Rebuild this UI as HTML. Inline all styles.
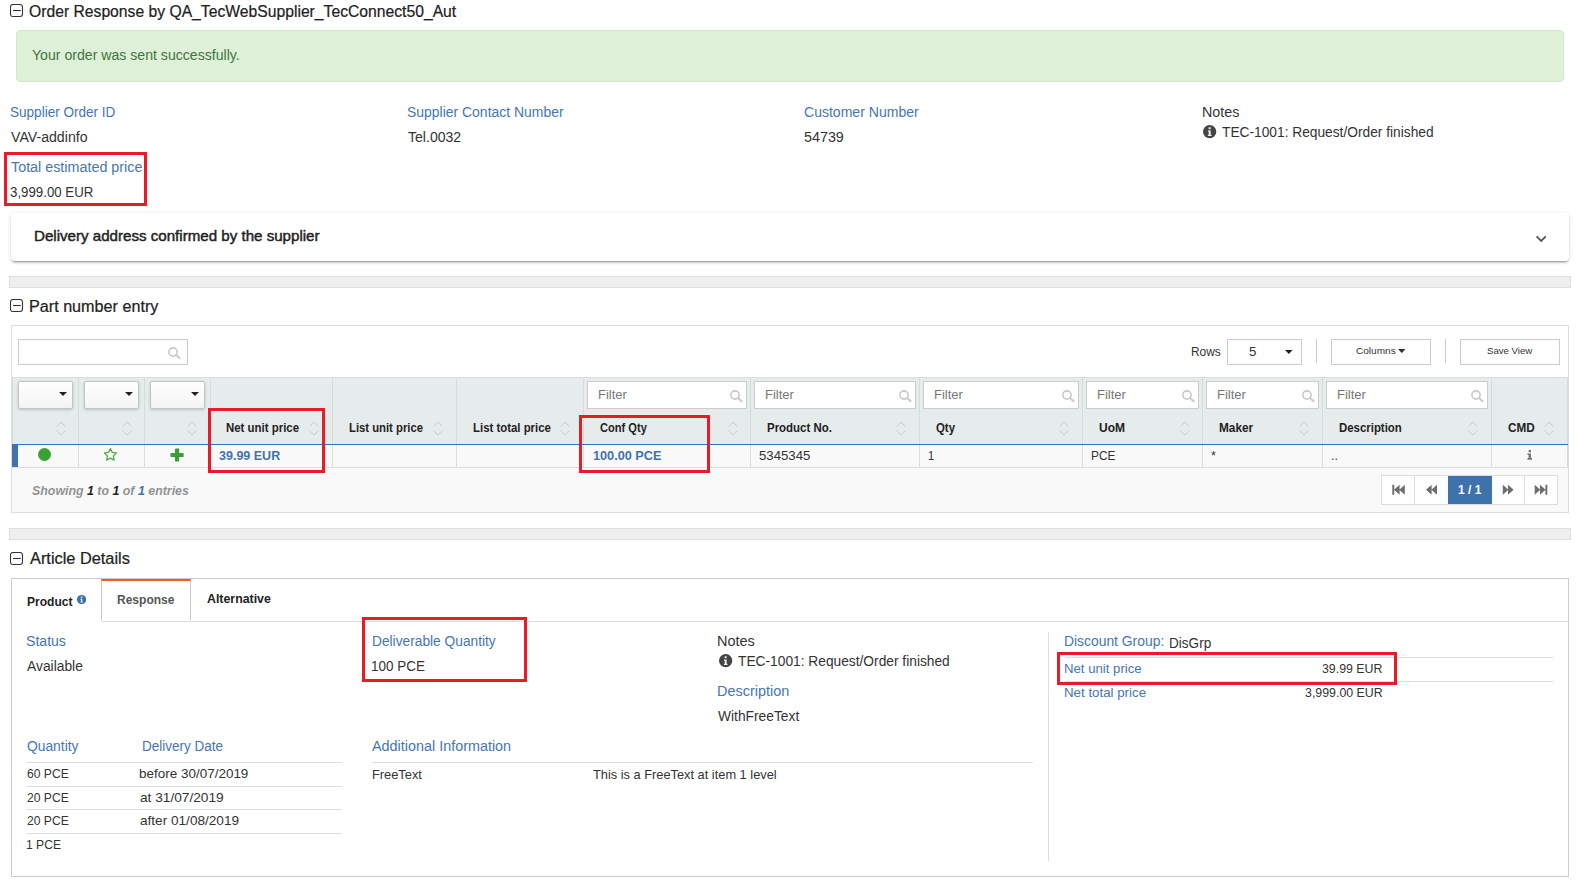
<!DOCTYPE html>
<html><head><meta charset="utf-8"><title>Order Response</title>
<style>
html,body{margin:0;padding:0;background:#fff}
body{width:1581px;height:881px;position:relative;overflow:hidden;font-family:"Liberation Sans",sans-serif}
div,span.t,svg{position:absolute;box-sizing:border-box}
span.t{white-space:pre;transform-origin:0 0;display:block}
</style></head>
<body>
<svg style="left:10px;top:4px" width="14" height="14" viewBox="0 0 14 14"><rect x="0.5" y="0.5" width="12" height="12" rx="2.5" fill="#fff" stroke="#333" stroke-width="1.1"/><path d="M3 6.5h7.8" stroke="#333" stroke-width="1.1"/></svg>
<span class="t" style="left:29.25px;top:3.60px;font:400 16px/1 'Liberation Sans',sans-serif;color:#222;transform:scaleX(0.9809);-webkit-text-stroke:0.22px #222">Order Response by QA_TecWebSupplier_TecConnect50_Aut</span>
<div style="left:16px;top:30px;width:1548px;height:52px;background:#dff0d8;border:1px solid #d3e8c8;border-radius:4px"></div>
<span class="t" style="left:31.99px;top:47.70px;font:400 14px/1 'Liberation Sans',sans-serif;color:#3c763d;transform:scaleX(1.0075);">Your order was sent successfully.</span>
<span class="t" style="left:10.29px;top:105.00px;font:400 14px/1 'Liberation Sans',sans-serif;color:#4676b0;transform:scaleX(0.9676);">Supplier Order ID</span>
<span class="t" style="left:10.68px;top:130.00px;font:400 14px/1 'Liberation Sans',sans-serif;color:#333;transform:scaleX(1.0104);">VAV-addinfo</span>
<span class="t" style="left:10.53px;top:160.00px;font:400 14px/1 'Liberation Sans',sans-serif;color:#4676b0;transform:scaleX(1.0233);">Total estimated price</span>
<span class="t" style="left:10.26px;top:185.00px;font:400 14px/1 'Liberation Sans',sans-serif;color:#333;transform:scaleX(0.9483);">3,999.00 EUR</span>
<span class="t" style="left:407.46px;top:105.00px;font:400 14px/1 'Liberation Sans',sans-serif;color:#4676b0;transform:scaleX(0.9962);">Supplier Contact Number</span>
<span class="t" style="left:407.94px;top:130.00px;font:400 14px/1 'Liberation Sans',sans-serif;color:#333;transform:scaleX(1.0045);">Tel.0032</span>
<span class="t" style="left:804.37px;top:105.00px;font:400 14px/1 'Liberation Sans',sans-serif;color:#4676b0;transform:scaleX(1.0026);">Customer Number</span>
<span class="t" style="left:804.48px;top:130.00px;font:400 14px/1 'Liberation Sans',sans-serif;color:#333;transform:scaleX(1.0226);">54739</span>
<span class="t" style="left:1201.64px;top:105.00px;font:400 14px/1 'Liberation Sans',sans-serif;color:#333;transform:scaleX(1.0219);">Notes</span>
<svg style="left:1203.35px;top:125.45px" width="13.3" height="13.3" viewBox="0 0 14 14"><circle cx="7" cy="7" r="7" fill="#444"/><path d="M5.2 5.9h2.9v4.3h0.9v1.3H5.1v-1.3h0.9V7.2H5.2z M5.9 2.4h2.2v2.1H5.9z" fill="#ececec"/></svg>
<span class="t" style="left:1222.35px;top:125.00px;font:400 14px/1 'Liberation Sans',sans-serif;color:#333;transform:scaleX(0.9815);">TEC-1001: Request/Order finished</span>
<div style="left:4px;top:152px;width:143px;height:54px;border:3px solid #e81c28"></div>
<div style="left:11px;top:213px;width:1558px;height:48px;background:#fff;border-radius:4px;box-shadow:0 3px 1px -2px rgba(0,0,0,.2),0 2px 2px 0 rgba(0,0,0,.14),0 1px 5px 0 rgba(0,0,0,.12)"></div>
<span class="t" style="left:34.03px;top:228.00px;font:400 15px/1 'Liberation Sans',sans-serif;color:#222;transform:scaleX(1.0074);-webkit-text-stroke:0.45px #222">Delivery address confirmed by the supplier</span>
<svg style="left:1534px;top:233px" width="14" height="12" viewBox="0 0 14 12"><path d="M2.6 3.4L7.2 8L11.8 3.4" fill="none" stroke="#555" stroke-width="1.8"/></svg>
<div style="left:9px;top:276px;width:1562px;height:12px;background:#eee;border:1px solid #dfdfdf"></div>
<div style="left:9px;top:528px;width:1562px;height:12px;background:#eee;border:1px solid #dfdfdf"></div>
<svg style="left:10px;top:299px" width="14" height="14" viewBox="0 0 14 14"><rect x="0.5" y="0.5" width="12" height="12" rx="2.5" fill="#fff" stroke="#333" stroke-width="1.1"/><path d="M3 6.5h7.8" stroke="#333" stroke-width="1.1"/></svg>
<span class="t" style="left:28.91px;top:298.60px;font:400 16px/1 'Liberation Sans',sans-serif;color:#222;transform:scaleX(1.0101);-webkit-text-stroke:0.22px #222">Part number entry</span>
<div style="left:11px;top:325px;width:1558px;height:188px;border:1px solid #ddd;background:#fff"></div>
<div style="left:18px;top:339px;width:170px;height:26px;border:1px solid #ccc;background:#fff"></div>
<svg style="left:165.50px;top:344.90px" width="16" height="16" viewBox="0 0 16 16"><circle cx="7" cy="7" r="4.1" fill="none" stroke="#c9c9c9" stroke-width="1.6"/><path d="M10.1 10.1L13.6 13.3" stroke="#c9c9c9" stroke-width="2" stroke-linecap="round"/></svg>
<span class="t" style="left:1191.16px;top:345.00px;font:400 13px/1 'Liberation Sans',sans-serif;color:#333;transform:scaleX(0.9180);">Rows</span>
<div style="left:1227px;top:339px;width:75px;height:26px;border:1px solid #ccc;background:#fff"></div>
<span class="t" style="left:1249.22px;top:344.60px;font:400 13px/1 'Liberation Sans',sans-serif;color:#333;transform:scaleX(1.0186);">5</span>
<svg style="left:1285.20px;top:350.20px" width="7.6" height="4" viewBox="0 0 7.6 4"><path d="M0 0H7.6L3.8 4Z" fill="#222"/></svg>
<div style="left:1316.2px;top:339px;width:1px;height:23.6px;background:#ccc"></div>
<div style="left:1445px;top:339px;width:1px;height:23.6px;background:#ccc"></div>
<div style="left:1331px;top:339px;width:100px;height:26px;border:1px solid #ccc;background:#fff"></div>
<span class="t" style="left:1356.29px;top:345.80px;font:400 9.8px/1 'Liberation Sans',sans-serif;color:#333;transform:scaleX(1.0261);">Columns</span>
<svg style="left:1398.30px;top:349.00px" width="7.5" height="4.1" viewBox="0 0 7.5 4.1"><path d="M0 0H7.5L3.75 4.1Z" fill="#333"/></svg>
<div style="left:1460px;top:339px;width:100px;height:26px;border:1px solid #ccc;background:#fff"></div>
<span class="t" style="left:1487.20px;top:345.80px;font:400 9.8px/1 'Liberation Sans',sans-serif;color:#333;transform:scaleX(0.9827);">Save View</span>
<div style="left:12px;top:377px;width:1556px;height:67px;background:#e6ecec"></div>
<div style="left:12px;top:445px;width:1556px;height:22px;background:#f9f9f9"></div>
<div style="left:12px;top:468px;width:1556px;height:44px;background:#f9f9f9"></div>
<div style="left:12px;top:467px;width:1556px;height:1px;background:#ddd"></div>
<div style="left:78px;top:377px;width:1px;height:67px;background:#d6dbdb"></div>
<div style="left:78px;top:445px;width:1px;height:22px;background:#ddd"></div>
<div style="left:144px;top:377px;width:1px;height:67px;background:#d6dbdb"></div>
<div style="left:144px;top:445px;width:1px;height:22px;background:#ddd"></div>
<div style="left:210px;top:377px;width:1px;height:67px;background:#d6dbdb"></div>
<div style="left:210px;top:445px;width:1px;height:22px;background:#ddd"></div>
<div style="left:332px;top:377px;width:1px;height:67px;background:#d6dbdb"></div>
<div style="left:332px;top:445px;width:1px;height:22px;background:#ddd"></div>
<div style="left:456px;top:377px;width:1px;height:67px;background:#d6dbdb"></div>
<div style="left:456px;top:445px;width:1px;height:22px;background:#ddd"></div>
<div style="left:583px;top:377px;width:1px;height:67px;background:#d6dbdb"></div>
<div style="left:583px;top:445px;width:1px;height:22px;background:#ddd"></div>
<div style="left:750px;top:377px;width:1px;height:67px;background:#d6dbdb"></div>
<div style="left:750px;top:445px;width:1px;height:22px;background:#ddd"></div>
<div style="left:919px;top:377px;width:1px;height:67px;background:#d6dbdb"></div>
<div style="left:919px;top:445px;width:1px;height:22px;background:#ddd"></div>
<div style="left:1082px;top:377px;width:1px;height:67px;background:#d6dbdb"></div>
<div style="left:1082px;top:445px;width:1px;height:22px;background:#ddd"></div>
<div style="left:1202px;top:377px;width:1px;height:67px;background:#d6dbdb"></div>
<div style="left:1202px;top:445px;width:1px;height:22px;background:#ddd"></div>
<div style="left:1322px;top:377px;width:1px;height:67px;background:#d6dbdb"></div>
<div style="left:1322px;top:445px;width:1px;height:22px;background:#ddd"></div>
<div style="left:1491px;top:377px;width:1px;height:67px;background:#d6dbdb"></div>
<div style="left:1491px;top:445px;width:1px;height:22px;background:#ddd"></div>
<div style="left:1567px;top:377px;width:1px;height:90px;background:#d9d9d9"></div>
<div style="left:12px;top:377px;width:1556px;height:1px;background:#dcdcdc"></div>
<div style="left:12px;top:377px;width:1px;height:67px;background:#dcdcdc"></div>
<div style="left:12px;top:444px;width:1556px;height:1.2px;background:#3c70aa"></div>
<div style="left:12.3px;top:445px;width:5.4px;height:21.8px;background:#4072ad"></div>
<div style="left:18px;top:381px;width:55px;height:28px;border:1px solid #c4c4c4;border-radius:2px;background:linear-gradient(#fff,#f4f4f4);box-shadow:0 1px 3px rgba(0,0,0,.18)"></div>
<svg style="left:59.10px;top:392.00px" width="8" height="4" viewBox="0 0 8 4"><path d="M0 0H8L4.0 4Z" fill="#222"/></svg>
<div style="left:84px;top:381px;width:55px;height:28px;border:1px solid #c4c4c4;border-radius:2px;background:linear-gradient(#fff,#f4f4f4);box-shadow:0 1px 3px rgba(0,0,0,.18)"></div>
<svg style="left:125.10px;top:392.00px" width="8" height="4" viewBox="0 0 8 4"><path d="M0 0H8L4.0 4Z" fill="#222"/></svg>
<div style="left:150px;top:381px;width:55px;height:28px;border:1px solid #c4c4c4;border-radius:2px;background:linear-gradient(#fff,#f4f4f4);box-shadow:0 1px 3px rgba(0,0,0,.18)"></div>
<svg style="left:191.10px;top:392.00px" width="8" height="4" viewBox="0 0 8 4"><path d="M0 0H8L4.0 4Z" fill="#222"/></svg>
<div style="left:587px;top:381px;width:160px;height:28px;border:1px solid #ccc;background:#fff"></div>
<span class="t" style="left:597.88px;top:387.90px;font:400 13px/1 'Liberation Sans',sans-serif;color:#777;transform:scaleX(1.0015);">Filter</span>
<svg style="left:727.65px;top:387.80px" width="16" height="16" viewBox="0 0 16 16"><circle cx="7" cy="7" r="4.1" fill="none" stroke="#c9c9c9" stroke-width="1.6"/><path d="M10.1 10.1L13.6 13.3" stroke="#c9c9c9" stroke-width="2" stroke-linecap="round"/></svg>
<div style="left:754px;top:381px;width:162px;height:28px;border:1px solid #ccc;background:#fff"></div>
<span class="t" style="left:764.88px;top:387.90px;font:400 13px/1 'Liberation Sans',sans-serif;color:#777;transform:scaleX(1.0015);">Filter</span>
<svg style="left:896.65px;top:387.80px" width="16" height="16" viewBox="0 0 16 16"><circle cx="7" cy="7" r="4.1" fill="none" stroke="#c9c9c9" stroke-width="1.6"/><path d="M10.1 10.1L13.6 13.3" stroke="#c9c9c9" stroke-width="2" stroke-linecap="round"/></svg>
<div style="left:923px;top:381px;width:156px;height:28px;border:1px solid #ccc;background:#fff"></div>
<span class="t" style="left:933.88px;top:387.90px;font:400 13px/1 'Liberation Sans',sans-serif;color:#777;transform:scaleX(1.0015);">Filter</span>
<svg style="left:1059.65px;top:387.80px" width="16" height="16" viewBox="0 0 16 16"><circle cx="7" cy="7" r="4.1" fill="none" stroke="#c9c9c9" stroke-width="1.6"/><path d="M10.1 10.1L13.6 13.3" stroke="#c9c9c9" stroke-width="2" stroke-linecap="round"/></svg>
<div style="left:1086px;top:381px;width:113px;height:28px;border:1px solid #ccc;background:#fff"></div>
<span class="t" style="left:1096.88px;top:387.90px;font:400 13px/1 'Liberation Sans',sans-serif;color:#777;transform:scaleX(1.0015);">Filter</span>
<svg style="left:1179.65px;top:387.80px" width="16" height="16" viewBox="0 0 16 16"><circle cx="7" cy="7" r="4.1" fill="none" stroke="#c9c9c9" stroke-width="1.6"/><path d="M10.1 10.1L13.6 13.3" stroke="#c9c9c9" stroke-width="2" stroke-linecap="round"/></svg>
<div style="left:1206px;top:381px;width:113px;height:28px;border:1px solid #ccc;background:#fff"></div>
<span class="t" style="left:1216.88px;top:387.90px;font:400 13px/1 'Liberation Sans',sans-serif;color:#777;transform:scaleX(1.0015);">Filter</span>
<svg style="left:1299.65px;top:387.80px" width="16" height="16" viewBox="0 0 16 16"><circle cx="7" cy="7" r="4.1" fill="none" stroke="#c9c9c9" stroke-width="1.6"/><path d="M10.1 10.1L13.6 13.3" stroke="#c9c9c9" stroke-width="2" stroke-linecap="round"/></svg>
<div style="left:1326px;top:381px;width:162px;height:28px;border:1px solid #ccc;background:#fff"></div>
<span class="t" style="left:1336.88px;top:387.90px;font:400 13px/1 'Liberation Sans',sans-serif;color:#777;transform:scaleX(1.0015);">Filter</span>
<svg style="left:1468.65px;top:387.80px" width="16" height="16" viewBox="0 0 16 16"><circle cx="7" cy="7" r="4.1" fill="none" stroke="#c9c9c9" stroke-width="1.6"/><path d="M10.1 10.1L13.6 13.3" stroke="#c9c9c9" stroke-width="2" stroke-linecap="round"/></svg>
<svg style="left:54.50px;top:420px" width="12" height="17" viewBox="0 0 12 17"><path d="M1.5 6.7L6 1.9L10.5 6.7M1.5 10.3L6 15.1L10.5 10.3" fill="none" stroke="#c6caca" stroke-width="0.9"/></svg>
<svg style="left:120.50px;top:420px" width="12" height="17" viewBox="0 0 12 17"><path d="M1.5 6.7L6 1.9L10.5 6.7M1.5 10.3L6 15.1L10.5 10.3" fill="none" stroke="#c6caca" stroke-width="0.9"/></svg>
<svg style="left:186.40px;top:420px" width="12" height="17" viewBox="0 0 12 17"><path d="M1.5 6.7L6 1.9L10.5 6.7M1.5 10.3L6 15.1L10.5 10.3" fill="none" stroke="#c6caca" stroke-width="0.9"/></svg>
<svg style="left:308.30px;top:420px" width="12" height="17" viewBox="0 0 12 17"><path d="M1.5 6.7L6 1.9L10.5 6.7M1.5 10.3L6 15.1L10.5 10.3" fill="none" stroke="#c6caca" stroke-width="0.9"/></svg>
<svg style="left:432.40px;top:420px" width="12" height="17" viewBox="0 0 12 17"><path d="M1.5 6.7L6 1.9L10.5 6.7M1.5 10.3L6 15.1L10.5 10.3" fill="none" stroke="#c6caca" stroke-width="0.9"/></svg>
<svg style="left:559.00px;top:420px" width="12" height="17" viewBox="0 0 12 17"><path d="M1.5 6.7L6 1.9L10.5 6.7M1.5 10.3L6 15.1L10.5 10.3" fill="none" stroke="#c6caca" stroke-width="0.9"/></svg>
<svg style="left:726.50px;top:420px" width="12" height="17" viewBox="0 0 12 17"><path d="M1.5 6.7L6 1.9L10.5 6.7M1.5 10.3L6 15.1L10.5 10.3" fill="none" stroke="#c6caca" stroke-width="0.9"/></svg>
<svg style="left:895.40px;top:420px" width="12" height="17" viewBox="0 0 12 17"><path d="M1.5 6.7L6 1.9L10.5 6.7M1.5 10.3L6 15.1L10.5 10.3" fill="none" stroke="#c6caca" stroke-width="0.9"/></svg>
<svg style="left:1058.40px;top:420px" width="12" height="17" viewBox="0 0 12 17"><path d="M1.5 6.7L6 1.9L10.5 6.7M1.5 10.3L6 15.1L10.5 10.3" fill="none" stroke="#c6caca" stroke-width="0.9"/></svg>
<svg style="left:1178.60px;top:420px" width="12" height="17" viewBox="0 0 12 17"><path d="M1.5 6.7L6 1.9L10.5 6.7M1.5 10.3L6 15.1L10.5 10.3" fill="none" stroke="#c6caca" stroke-width="0.9"/></svg>
<svg style="left:1298.40px;top:420px" width="12" height="17" viewBox="0 0 12 17"><path d="M1.5 6.7L6 1.9L10.5 6.7M1.5 10.3L6 15.1L10.5 10.3" fill="none" stroke="#c6caca" stroke-width="0.9"/></svg>
<svg style="left:1467.30px;top:420px" width="12" height="17" viewBox="0 0 12 17"><path d="M1.5 6.7L6 1.9L10.5 6.7M1.5 10.3L6 15.1L10.5 10.3" fill="none" stroke="#c6caca" stroke-width="0.9"/></svg>
<svg style="left:1543.00px;top:420px" width="12" height="17" viewBox="0 0 12 17"><path d="M1.5 6.7L6 1.9L10.5 6.7M1.5 10.3L6 15.1L10.5 10.3" fill="none" stroke="#c6caca" stroke-width="0.9"/></svg>
<span class="t" style="left:226.27px;top:422.00px;font:700 12px/1 'Liberation Sans',sans-serif;color:#222;transform:scaleX(0.9530);">Net unit price</span>
<span class="t" style="left:348.88px;top:422.00px;font:700 12px/1 'Liberation Sans',sans-serif;color:#222;transform:scaleX(0.9400);">List unit price</span>
<span class="t" style="left:472.57px;top:422.00px;font:700 12px/1 'Liberation Sans',sans-serif;color:#222;transform:scaleX(0.9497);">List total price</span>
<span class="t" style="left:600.40px;top:422.00px;font:700 12px/1 'Liberation Sans',sans-serif;color:#222;transform:scaleX(0.9237);">Conf Qty</span>
<span class="t" style="left:766.57px;top:422.00px;font:700 12px/1 'Liberation Sans',sans-serif;color:#222;transform:scaleX(0.9534);">Product No.</span>
<span class="t" style="left:935.56px;top:422.00px;font:700 12px/1 'Liberation Sans',sans-serif;color:#222;transform:scaleX(0.9474);">Qty</span>
<span class="t" style="left:1098.58px;top:422.00px;font:700 12px/1 'Liberation Sans',sans-serif;color:#222;transform:scaleX(1.0038);">UoM</span>
<span class="t" style="left:1218.94px;top:422.00px;font:700 12px/1 'Liberation Sans',sans-serif;color:#222;transform:scaleX(0.9853);">Maker</span>
<span class="t" style="left:1338.77px;top:422.00px;font:700 12px/1 'Liberation Sans',sans-serif;color:#222;transform:scaleX(0.9508);">Description</span>
<span class="t" style="left:1507.57px;top:422.00px;font:700 12px/1 'Liberation Sans',sans-serif;color:#222;transform:scaleX(0.9782);">CMD</span>
<div style="left:37.9px;top:448.4px;width:13px;height:13px;border-radius:50%;background:#3aa135"></div>
<svg style="left:103.2px;top:447px" width="14.8" height="14.8" viewBox="0 0 14 14"><path d="M7 1.4L8.7 5.1L12.7 5.6L9.8 8.4L10.5 12.4L7 10.5L3.5 12.4L4.2 8.4L1.3 5.6L5.3 5.1Z" fill="none" stroke="#55a851" stroke-width="1.25" stroke-linejoin="round"/></svg>
<svg style="left:170px;top:448px" width="14" height="14" viewBox="0 0 14 14"><rect x="4.95" y="0.4" width="4.2" height="13.2" rx="0.9" fill="#3b9e36"/><rect x="0.45" y="4.9" width="13.2" height="4.2" rx="0.9" fill="#3b9e36"/></svg>
<span class="t" style="left:218.57px;top:448.80px;font:700 13px/1 'Liberation Sans',sans-serif;color:#4173ad;transform:scaleX(0.9620);">39.99 EUR</span>
<span class="t" style="left:592.55px;top:448.80px;font:700 13px/1 'Liberation Sans',sans-serif;color:#4173ad;transform:scaleX(0.9761);">100.00 PCE</span>
<span class="t" style="left:759.02px;top:448.80px;font:400 13px/1 'Liberation Sans',sans-serif;color:#333;transform:scaleX(1.0146);">5345345</span>
<span class="t" style="left:927.55px;top:448.80px;font:400 13px/1 'Liberation Sans',sans-serif;color:#333;transform:scaleX(0.8500);">1</span>
<span class="t" style="left:1090.87px;top:448.80px;font:400 13px/1 'Liberation Sans',sans-serif;color:#333;transform:scaleX(0.9118);">PCE</span>
<span class="t" style="left:1211.19px;top:448.80px;font:400 13px/1 'Liberation Sans',sans-serif;color:#333;transform:scaleX(0.9600);">*</span>
<span class="t" style="left:1331.34px;top:448.80px;font:400 13px/1 'Liberation Sans',sans-serif;color:#333;transform:scaleX(0.9600);">..</span>
<svg style="left:1526.5px;top:449.9px" width="5.6" height="10" viewBox="0 0 7 11" preserveAspectRatio="none"><path d="M2 0h3v2.5H2z M0.6 3.8h4.4v5h1.4v1.9H0.6V8.8H2V5.6H0.6z" fill="#787878"/></svg>
<span class="t" style="left:32.13px;top:484.00px;font:italic 700 13px/1 'Liberation Sans',sans-serif;color:#939393;transform:scaleX(0.9522);">Showing <span style="color:#222">1</span> to <span style="color:#222">1</span> of <span style="color:#3f72ac">1</span> entries</span>
<div style="left:1381px;top:475px;width:177px;height:30px;border:1px solid #ddd;background:#fefefe"></div>
<div style="left:1414px;top:476px;width:1px;height:28px;background:#ddd"></div>
<div style="left:1524px;top:476px;width:1px;height:28px;background:#ddd"></div>
<div style="left:1448px;top:476px;width:44px;height:28px;background:#3d72ad"></div>
<span class="t" style="left:1457.59px;top:482.80px;font:700 13px/1 'Liberation Sans',sans-serif;color:#fff;transform:scaleX(0.9215);">1 / 1</span>
<svg style="left:1380px;top:475px" width="180" height="30" viewBox="0 0 180 30"><path d="M12.3 9.8h1.9v9.9h-1.9zM19.6 9.8V19.700000000000003L14 14.75ZM24.799999999999997 9.8V19.700000000000003L19.2 14.75Z" fill="#6e6e6e"/></svg>
<svg style="left:1380px;top:475px" width="180" height="30" viewBox="0 0 180 30"><path d="M51.6 9.8V19.700000000000003L46 14.75ZM57.0 9.8V19.700000000000003L51.4 14.75Z" fill="#6e6e6e"/></svg>
<svg style="left:1380px;top:475px" width="180" height="30" viewBox="0 0 180 30"><path d="M122.8 9.8V19.700000000000003L128.4 14.75ZM128 9.8V19.700000000000003L133.6 14.75Z" fill="#6e6e6e"/></svg>
<svg style="left:1380px;top:475px" width="180" height="30" viewBox="0 0 180 30"><path d="M154.7 9.8V19.700000000000003L160.29999999999998 14.75ZM160 9.8V19.700000000000003L165.6 14.75ZM165.4 9.8h1.9v9.9h-1.9z" fill="#6e6e6e"/></svg>
<div style="left:208px;top:408px;width:117px;height:65px;border:3px solid #e81c28"></div>
<div style="left:579px;top:415px;width:131px;height:58px;border:3px solid #e81c28"></div>
<svg style="left:10px;top:551.5px" width="14" height="14" viewBox="0 0 14 14"><rect x="0.5" y="0.5" width="12" height="12" rx="2.5" fill="#fff" stroke="#333" stroke-width="1.1"/><path d="M3 6.5h7.8" stroke="#333" stroke-width="1.1"/></svg>
<span class="t" style="left:29.63px;top:550.80px;font:400 16px/1 'Liberation Sans',sans-serif;color:#222;transform:scaleX(1.0212);-webkit-text-stroke:0.22px #222">Article Details</span>
<div style="left:11px;top:578px;width:1558px;height:299px;border:1px solid #ccc;background:#fff"></div>
<div style="left:101px;top:621px;width:1467px;height:1px;background:#ddd"></div>
<div style="left:101px;top:579px;width:90px;height:41px;border-left:1px solid #c6c6c6;border-right:1px solid #c6c6c6;border-top:2px solid #f55c25;background:#fff"></div>
<span class="t" style="left:27.43px;top:595.00px;font:700 13px/1 'Liberation Sans',sans-serif;color:#222;transform:scaleX(0.9278);">Product</span>
<svg style="left:77.10px;top:594.80px" width="9.2" height="9.2" viewBox="0 0 14 14"><circle cx="7" cy="7" r="7" fill="#3c6faa"/><path d="M5.2 5.9h2.9v4.3h0.9v1.3H5.1v-1.3h0.9V7.2H5.2z M5.9 2.4h2.2v2.1H5.9z" fill="#ececec"/></svg>
<span class="t" style="left:117.14px;top:593.20px;font:700 13px/1 'Liberation Sans',sans-serif;color:#555;transform:scaleX(0.9241);">Response</span>
<span class="t" style="left:207.00px;top:592.00px;font:700 13px/1 'Liberation Sans',sans-serif;color:#222;transform:scaleX(0.9498);">Alternative</span>
<span class="t" style="left:26.45px;top:634.00px;font:400 14px/1 'Liberation Sans',sans-serif;color:#4676b0;transform:scaleX(1.0054);">Status</span>
<span class="t" style="left:26.98px;top:659.00px;font:400 14px/1 'Liberation Sans',sans-serif;color:#333;transform:scaleX(0.9876);">Available</span>
<span class="t" style="left:371.58px;top:634.30px;font:400 14px/1 'Liberation Sans',sans-serif;color:#4676b0;transform:scaleX(0.9816);">Deliverable Quantity</span>
<span class="t" style="left:371.36px;top:659.20px;font:400 14px/1 'Liberation Sans',sans-serif;color:#333;transform:scaleX(0.9615);">100 PCE</span>
<span class="t" style="left:717.13px;top:634.30px;font:400 14px/1 'Liberation Sans',sans-serif;color:#333;transform:scaleX(1.0333);">Notes</span>
<svg style="left:719.45px;top:654.25px" width="13.3" height="13.3" viewBox="0 0 14 14"><circle cx="7" cy="7" r="7" fill="#444"/><path d="M5.2 5.9h2.9v4.3h0.9v1.3H5.1v-1.3h0.9V7.2H5.2z M5.9 2.4h2.2v2.1H5.9z" fill="#ececec"/></svg>
<span class="t" style="left:737.95px;top:654.30px;font:400 14px/1 'Liberation Sans',sans-serif;color:#333;transform:scaleX(0.9824);">TEC-1001: Request/Order finished</span>
<span class="t" style="left:717.13px;top:684.20px;font:400 14px/1 'Liberation Sans',sans-serif;color:#4676b0;transform:scaleX(1.0312);">Description</span>
<span class="t" style="left:717.91px;top:708.80px;font:400 14px/1 'Liberation Sans',sans-serif;color:#333;transform:scaleX(0.9850);">WithFreeText</span>
<div style="left:1048px;top:632.2px;width:1px;height:228.6px;background:#ddd"></div>
<span class="t" style="left:1064.07px;top:634.20px;font:400 14px/1 'Liberation Sans',sans-serif;color:#4676b0;transform:scaleX(0.9909);">Discount Group:</span>
<span class="t" style="left:1168.59px;top:635.50px;font:400 14px/1 'Liberation Sans',sans-serif;color:#333;transform:scaleX(0.9691);">DisGrp</span>
<div style="left:1064.5px;top:656.6px;width:488.5px;height:1px;background:#ddd"></div>
<div style="left:1064.5px;top:681px;width:488.5px;height:1px;background:#ddd"></div>
<span class="t" style="left:1064.08px;top:661.80px;font:400 13px/1 'Liberation Sans',sans-serif;color:#4676b0;transform:scaleX(1.0145);">Net unit price</span>
<span class="t" style="left:1322.31px;top:661.80px;font:400 13px/1 'Liberation Sans',sans-serif;color:#333;transform:scaleX(0.9502);">39.99 EUR</span>
<span class="t" style="left:1064.07px;top:685.80px;font:400 13px/1 'Liberation Sans',sans-serif;color:#4676b0;transform:scaleX(1.0230);">Net total price</span>
<span class="t" style="left:1305.11px;top:685.80px;font:400 13px/1 'Liberation Sans',sans-serif;color:#333;transform:scaleX(0.9514);">3,999.00 EUR</span>
<span class="t" style="left:26.62px;top:739.00px;font:400 14px/1 'Liberation Sans',sans-serif;color:#4676b0;transform:scaleX(0.9872);">Quantity</span>
<span class="t" style="left:141.59px;top:739.00px;font:400 14px/1 'Liberation Sans',sans-serif;color:#4676b0;transform:scaleX(0.9656);">Delivery Date</span>
<span class="t" style="left:372.17px;top:739.00px;font:400 14px/1 'Liberation Sans',sans-serif;color:#4676b0;transform:scaleX(1.0274);">Additional Information</span>
<div style="left:27px;top:761.7px;width:315px;height:1px;background:#ddd"></div>
<div style="left:27px;top:785.9px;width:315px;height:1px;background:#ddd"></div>
<div style="left:27px;top:809.2px;width:315px;height:1px;background:#ddd"></div>
<div style="left:27px;top:832.8px;width:315px;height:1px;background:#ddd"></div>
<div style="left:372px;top:761.8px;width:661px;height:1px;background:#ddd"></div>
<span class="t" style="left:26.67px;top:766.60px;font:400 13px/1 'Liberation Sans',sans-serif;color:#333;transform:scaleX(0.9319);">60 PCE</span>
<span class="t" style="left:139.36px;top:766.60px;font:400 13px/1 'Liberation Sans',sans-serif;color:#333;transform:scaleX(1.0363);">before 30/07/2019</span>
<span class="t" style="left:26.66px;top:790.60px;font:400 13px/1 'Liberation Sans',sans-serif;color:#333;transform:scaleX(0.9322);">20 PCE</span>
<span class="t" style="left:139.60px;top:790.60px;font:400 13px/1 'Liberation Sans',sans-serif;color:#333;transform:scaleX(1.0516);">at 31/07/2019</span>
<span class="t" style="left:26.66px;top:814.00px;font:400 13px/1 'Liberation Sans',sans-serif;color:#333;transform:scaleX(0.9322);">20 PCE</span>
<span class="t" style="left:139.60px;top:814.00px;font:400 13px/1 'Liberation Sans',sans-serif;color:#333;transform:scaleX(1.0462);">after 01/08/2019</span>
<span class="t" style="left:26.26px;top:838.00px;font:400 13px/1 'Liberation Sans',sans-serif;color:#333;transform:scaleX(0.9328);">1 PCE</span>
<span class="t" style="left:371.60px;top:767.60px;font:400 13px/1 'Liberation Sans',sans-serif;color:#333;transform:scaleX(0.9862);">FreeText</span>
<span class="t" style="left:593.05px;top:767.60px;font:400 13px/1 'Liberation Sans',sans-serif;color:#333;transform:scaleX(0.9852);">This is a FreeText at item 1 level</span>
<div style="left:362px;top:617px;width:165px;height:65px;border:3px solid #e81c28"></div>
<div style="left:1057px;top:652px;width:340px;height:33px;border:3px solid #e81c28"></div>
</body></html>
